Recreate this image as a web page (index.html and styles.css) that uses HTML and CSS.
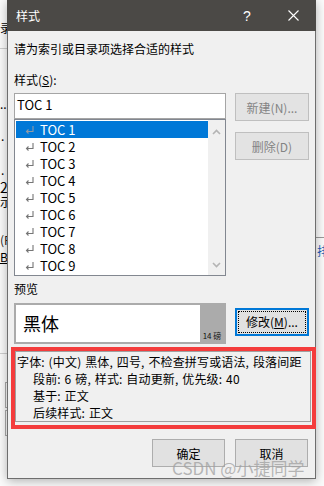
FILE: index.html
```html
<!doctype html>
<html lang="zh-CN">
<head>
  <meta charset="UTF-8">
  <title>样式</title>
  <link rel="stylesheet" href="styles.css">
</head>
<body>
  <!-- 对话框后面露出来的 Word 文档碎片 -->
  <div class="doc-bits">
    <span class="bit bit-lu">录(</span>
    <span class="bit-line line-1"></span>
    <span class="bit bit-dots1">..</span>
    <span class="bit bit-dots2">.</span>
    <span class="bit bit-dots3">.</span>
    <span class="bit bit-two">2</span>
    <span class="bit bit-shi">示</span>
    <span class="bit bit-f">(F</span>
    <span class="bit bit-b"><u>B</u></span>
    <span class="bit-line line-2"></span>
    <span class="bit-box box-1"></span>
    <span class="bit-box box-2"></span>
    <span class="bit-line line-3"></span>
    <span class="bit bit-pai">排</span>
  </div>

  <div class="dialog">
    <div class="titlebar">
      <span class="title">样式</span>
      <span class="tb-btn">?</span>
      <span class="tb-btn">
        <svg width="11" height="11" viewBox="0 0 11 11"><path d="M0.5 0.5L10.5 10.5M10.5 0.5L0.5 10.5" stroke="#fff" stroke-width="1.1" fill="none"/></svg>
      </span>
    </div>

    <div class="dlg-body">
      <p class="intro">请为索引或目录项选择合适的样式</p>
      <div class="label">样式(<u>S</u>):</div>

      <div class="row">
        <div class="col-left">
          <div class="combo-input">TOC 1</div>
          <div class="listbox">
            <ul class="list">
              <li class="item selected"><svg class="para" viewBox="0 0 9 9"><path d="M8 1V6.5H1.5M3.5 4.5L1.5 6.5L3.5 8.5" fill="none"/></svg>TOC 1</li>
              <li class="item"><svg class="para" viewBox="0 0 9 9"><path d="M8 1V6.5H1.5M3.5 4.5L1.5 6.5L3.5 8.5" fill="none"/></svg>TOC 2</li>
              <li class="item"><svg class="para" viewBox="0 0 9 9"><path d="M8 1V6.5H1.5M3.5 4.5L1.5 6.5L3.5 8.5" fill="none"/></svg>TOC 3</li>
              <li class="item"><svg class="para" viewBox="0 0 9 9"><path d="M8 1V6.5H1.5M3.5 4.5L1.5 6.5L3.5 8.5" fill="none"/></svg>TOC 4</li>
              <li class="item"><svg class="para" viewBox="0 0 9 9"><path d="M8 1V6.5H1.5M3.5 4.5L1.5 6.5L3.5 8.5" fill="none"/></svg>TOC 5</li>
              <li class="item"><svg class="para" viewBox="0 0 9 9"><path d="M8 1V6.5H1.5M3.5 4.5L1.5 6.5L3.5 8.5" fill="none"/></svg>TOC 6</li>
              <li class="item"><svg class="para" viewBox="0 0 9 9"><path d="M8 1V6.5H1.5M3.5 4.5L1.5 6.5L3.5 8.5" fill="none"/></svg>TOC 7</li>
              <li class="item"><svg class="para" viewBox="0 0 9 9"><path d="M8 1V6.5H1.5M3.5 4.5L1.5 6.5L3.5 8.5" fill="none"/></svg>TOC 8</li>
              <li class="item"><svg class="para" viewBox="0 0 9 9"><path d="M8 1V6.5H1.5M3.5 4.5L1.5 6.5L3.5 8.5" fill="none"/></svg>TOC 9</li>
            </ul>
            <div class="scrollbar">
              <svg width="9" height="6" viewBox="0 0 9 6"><path d="M1 5L4.5 1.5L8 5" stroke="#b4b4b4" stroke-width="1.6" fill="none"/></svg>
              <svg width="9" height="6" viewBox="0 0 9 6"><path d="M1 1L4.5 4.5L8 1" stroke="#b4b4b4" stroke-width="1.6" fill="none"/></svg>
            </div>
          </div>
        </div>
        <div class="col-right">
          <button type="button" class="btn" disabled>新建(N)...</button>
          <button type="button" class="btn" disabled>删除(D)</button>
        </div>
      </div>

      <div class="label preview-label">预览</div>
      <div class="row preview-row">
        <div class="preview">
          <span class="preview-font">黑体</span>
          <span class="preview-size">14 磅</span>
        </div>
        <button type="button" class="btn btn-focus"><span class="focus-ring">修改(<u>M</u>)...</span></button>
      </div>

      <div class="annot">
        <div class="desc">
          <div>字体: (中文) 黑体, 四号, 不检查拼写或语法, 段落间距</div>
          <div class="indent">段前: 6 磅, 样式: 自动更新, 优先级: 40</div>
          <div class="indent">基于: 正文</div>
          <div class="indent">后续样式: 正文</div>
        </div>
      </div>

      <div class="footer">
        <button type="button" class="btn">确定</button>
        <button type="button" class="btn">取消</button>
      </div>
    </div>
  </div>

  <div class="watermark">CSDN @小捷同学</div>
</body>
</html>
```

FILE: styles.css
```css
* {
  box-sizing: border-box;
}

html, body {
  margin: 0;
}

body {
  position: relative;
  width: 324px;
  height: 486px;
  overflow: hidden;
  background: #fbfbfb;
  font-family: "Noto Sans CJK SC", sans-serif;
  font-size: 12px;
  color: #000;
}

/* 背景碎片 */
.doc-bits {
  position: absolute;
  inset: 0;
}

.bit {
  position: absolute;
  font-size: 12px;
  line-height: 14px;
  white-space: nowrap;
}

.bit-lu { left: 0; top: 21px; }
.bit-dots1 { left: 0; top: 97px; }
.bit-dots2 { left: 1px; top: 129px; }
.bit-dots3 { left: 1px; top: 163px; }
.bit-two { left: 0; top: 180px; font-size: 14px; }
.bit-shi { left: 0; top: 195px; }
.bit-f { left: 0; top: 233px; color: #222; }
.bit-b { left: 0; top: 250px; }
.bit-pai { left: 317px; top: 244px; color: #1d5fb8; }

.bit-line {
  position: absolute;
  height: 1px;
  background: #cfcfcf;
}

.line-1 { left: 0; top: 48px; width: 8px; }
.line-2 { left: 0; top: 353px; width: 8px; }
.line-3 { left: 316px; top: 237px; width: 8px; background: #9a9a9a; }

.bit-box {
  position: absolute;
  left: 5px;
  width: 6px;
  border: 1px solid #aaa;
}

.box-1 { top: 382px; height: 26px; }
.box-2 { top: 410px; height: 26px; }

/* 对话框 */
.dialog {
  position: relative;
  z-index: 1;
  width: 309px;
  margin-left: 7px;
  background: #f0f0f0;
  border: 1px solid #6e6e6e;
  border-top: 0;
  box-shadow: 0 2px 10px rgb(0 0 0 / 30%);
}

.titlebar {
  display: flex;
  align-items: center;
  height: 31px;
  margin: 0 -1px;
  background: #4b4946;
  color: #fff;
}

.title {
  flex: 1;
  padding-left: 9px;
  font-size: 12px;
}

.tb-btn {
  display: flex;
  align-items: center;
  justify-content: center;
  width: 46px;
  height: 31px;
  font-family: "Liberation Sans", sans-serif;
  font-size: 14px;
}

.dlg-body {
  padding: 10px 6px 11px;
}

.intro {
  margin: 0;
  line-height: 16px;
}

.label {
  margin: 15px 0 5px;
  line-height: 16px;
}

.row {
  display: flex;
  gap: 9px;
}

.col-left {
  width: 212px;
}

.combo-input {
  height: 26px;
  padding-left: 2px;
  border: 1px solid #a5a5a5;
  background: #fff;
  font-size: 13px;
  line-height: 22px;
}

.listbox {
  display: flex;
  height: 157px;
  border: 1px solid #828790;
  background: #fff;
}

.list {
  flex: 1;
  list-style: none;
  margin: 0;
  padding: 1px 0 0 1px;
}

.item {
  display: flex;
  align-items: center;
  gap: 6px;
  height: 17px;
  padding-left: 9px;
  font-size: 13px;
}

.item.selected {
  background: #0078d7;
  color: #fff;
}

.para {
  width: 9px;
  height: 9px;
  stroke: #767676;
  stroke-width: 1.1;
}

.selected .para {
  stroke: #8f9aa6;
}

.scrollbar {
  display: flex;
  flex-direction: column;
  align-items: center;
  justify-content: space-between;
  width: 17px;
  padding: 9px 0 7px;
  background: #f0f0f0;
}

.col-right {
  display: flex;
  flex-direction: column;
  gap: 11px;
  width: 74px;
}

.btn {
  width: 74px;
  height: 28px;
  padding: 0;
  border: 1px solid #adadad;
  background: #e1e1e1;
  font-family: inherit;
  font-size: 12px;
  color: #000;
}

.btn:disabled {
  border-color: #bfbfbf;
  background: #e3e3e3;
  color: #838383;
}

.btn-focus {
  margin-top: 5px;
  padding: 1px;
  border: 2px solid #0078d7;
}

.focus-ring {
  display: block;
  height: 100%;
  border: 1px dotted #000;
  line-height: 20px;
}

.preview-label {
  margin: 5px 0 6px;
}

.preview {
  display: flex;
  width: 212px;
  height: 41px;
  border: 2px solid #ababab;
  background: #fff;
}

.preview-font {
  flex: 1;
  padding-left: 7px;
  font-size: 18px;
  line-height: 37px;
}

.preview-size {
  display: flex;
  align-items: flex-end;
  justify-content: center;
  width: 24px;
  padding-bottom: 1px;
  background: #ababab;
  font-size: 8px;
  line-height: 10px;
  color: #111;
}

/* 红框标注 */
.annot {
  margin: 3px -7px 0 -3px;
  border: 4px solid #f43c3c;
}

.desc {
  margin: 0 1px 3px 0;
  padding: 1px 0 0 1px;
  border: 1px solid #a0a0a0;
  line-height: 17px;
  letter-spacing: 0.15px;
  word-spacing: 1px;
  white-space: nowrap;
}

.indent {
  padding-left: 16px;
}

.footer {
  display: flex;
  justify-content: flex-end;
  gap: 10px;
  margin-top: 10px;
  padding-right: 1px;
}

.footer .btn {
  width: 73px;
}

.watermark {
  position: absolute;
  z-index: 2;
  left: 172px;
  top: 457px;
  font-size: 17px;
  line-height: 22px;
  color: rgb(160 160 160 / 75%);
  white-space: nowrap;
}
```
